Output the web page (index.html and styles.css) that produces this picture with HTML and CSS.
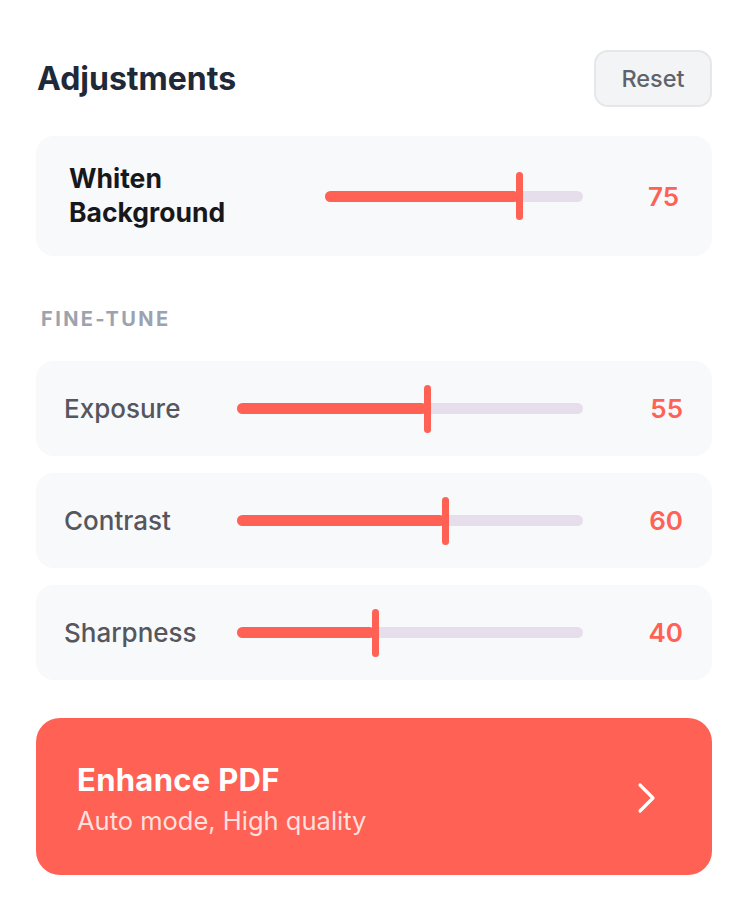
FILE: index.html
```html
<!DOCTYPE html>
<html lang="en">
<head>
<meta charset="utf-8">
<title>Adjustments</title>
<link rel="stylesheet" href="styles.css">
</head>
<body>
<div class="panel">
  <div class="header">
    <h1 class="title">Adjustments</h1>
    <button class="reset">Reset</button>
  </div>

  <div class="card card-main">
    <div class="label label-main">Whiten<br>Background</div>
    <div class="slider">
      <div class="fill" style="width:75%"></div>
      <div class="thumb" style="left:75%"></div>
    </div>
    <div class="value value-main">75</div>
  </div>

  <div class="section">FINE-TUNE</div>

  <div class="list">
    <div class="card card-fine">
      <div class="label label-fine">Exposure</div>
      <div class="slider">
        <div class="fill" style="width:55%"></div>
        <div class="thumb" style="left:55%"></div>
      </div>
      <div class="value value-fine">55</div>
    </div>
    <div class="card card-fine">
      <div class="label label-fine">Contrast</div>
      <div class="slider">
        <div class="fill" style="width:60%"></div>
        <div class="thumb" style="left:60%"></div>
      </div>
      <div class="value value-fine">60</div>
    </div>
    <div class="card card-fine">
      <div class="label label-fine">Sharpness</div>
      <div class="slider">
        <div class="fill" style="width:40%"></div>
        <div class="thumb" style="left:40%"></div>
      </div>
      <div class="value value-fine">40</div>
    </div>
  </div>

  <div class="cta">
    <div class="cta-text">
      <div class="cta-title">Enhance PDF</div>
      <div class="cta-sub">Auto mode, High quality</div>
    </div>
    <svg class="chevron" width="20" height="32" viewBox="0 0 20 32" aria-hidden="true">
      <polyline points="3,3 16,16 3,29" fill="none" stroke="#ffffff" stroke-width="3.2" stroke-linecap="round" stroke-linejoin="round"/>
    </svg>
  </div>
</div>
</body>
</html>
```

FILE: styles.css
```css
* { box-sizing: border-box; }

html, body {
  margin: 0;
  padding: 0;
  background: #ffffff;
}

body {
  font-family: Inter, "Noto Sans", "Liberation Sans", sans-serif;
}

.panel {
  padding: 50px 36px 30px 36px;
  display: flex;
  flex-direction: column;
}

.header {
  display: flex;
  align-items: center;
  justify-content: space-between;
  height: 57px;
}

.title {
  margin: 0 0 0 1px;
  font-size: 32px;
  font-weight: 700;
  color: #1f2937;
  letter-spacing: 0;
}

.reset {
  width: 118px;
  height: 57px;
  border: 2px solid #e5e7eb;
  background: #f3f4f6;
  border-radius: 14px;
  font-family: inherit;
  font-size: 23.5px;
  font-weight: 500;
  color: #5f6369;
  padding: 0;
}

.card {
  background: #f8f9fb;
  border-radius: 18px;
  display: flex;
  align-items: center;
}

.card-main {
  margin-top: 29px;
  height: 120px;
  padding: 0 33px 0 33px;
}

.label-main {
  width: 256px;
  font-size: 26.5px;
  font-weight: 700;
  line-height: 34px;
  color: #18181b;
  margin-top: -3px;
}

.slider {
  position: relative;
  flex: 1;
  height: 11px;
  border-radius: 6px;
  background: #e6dfeb;
}

.fill {
  height: 100%;
  border-radius: 6px;
  background: #ff6154;
}

.thumb {
  position: absolute;
  top: 50%;
  width: 7px;
  height: 48px;
  margin-left: -3px;
  transform: translateY(-50%);
  border-radius: 4px;
  background: #ff6154;
}

.value {
  text-align: right;
  font-size: 26px;
  font-weight: 600;
  color: #ff6154;
}

.value-main { width: 96px; }

.section {
  margin-top: 51px;
  margin-left: 5px;
  font-size: 20px;
  line-height: 24px;
  font-weight: 700;
  letter-spacing: 2.4px;
  color: #9ca3af;
}

.list {
  margin-top: 30px;
  display: flex;
  flex-direction: column;
  gap: 17px;
}

.card-fine {
  height: 95px;
  padding: 0 29px 0 28px;
}

.label-fine {
  width: 173px;
  font-size: 26px;
  font-weight: 500;
  color: #55565e;
}

.value-fine { width: 100px; }

.cta {
  margin-top: 38px;
  height: 157px;
  border-radius: 24px;
  background: #ff6154;
  display: flex;
  align-items: center;
  justify-content: space-between;
  padding: 0 55px 0 41px;
}

.cta-text {
  display: flex;
  flex-direction: column;
  gap: 7px;
  padding-top: 5px;
}

.cta-title {
  font-size: 31px;
  font-weight: 700;
  color: #ffffff;
  line-height: 36px;
  letter-spacing: 0.3px;
}

.cta-sub {
  font-size: 25.5px;
  font-weight: 400;
  color: rgba(255, 255, 255, 0.82);
  line-height: 32px;
}

.chevron {
  display: block;
  margin-top: 3px;
}
```
